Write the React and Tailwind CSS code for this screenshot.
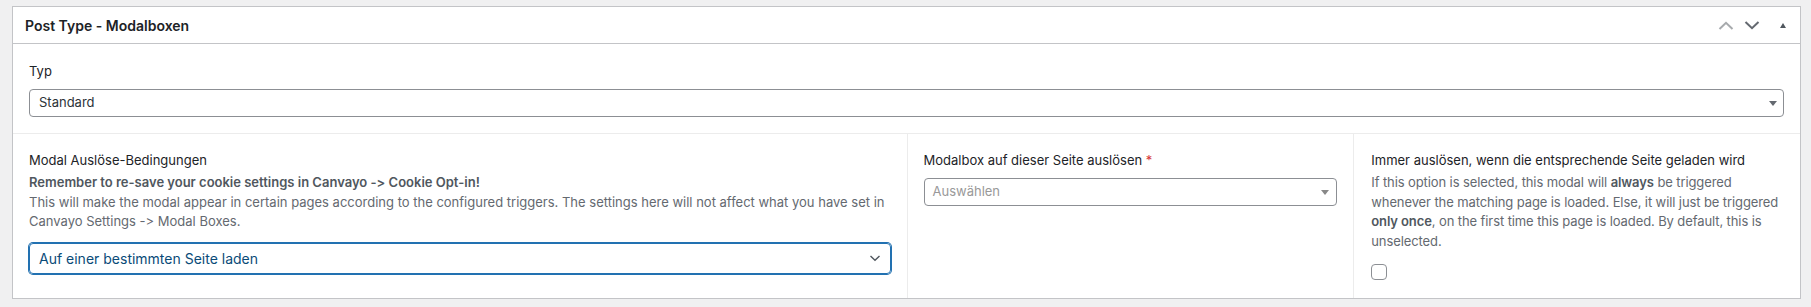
import React from 'react';

const font = { fontFamily: 'Inter, "Noto Sans", sans-serif' };

const ChevronUp = ({ className }) => (
  <svg className={className} width="16" height="9" viewBox="0 0 16 9" fill="none" stroke="currentColor" strokeWidth="2">
    <path d="M1.5 8L8 1.8 14.5 8" />
  </svg>
);

const ChevronDown = ({ className }) => (
  <svg className={className} width="16" height="9" viewBox="0 0 16 9" fill="none" stroke="currentColor" strokeWidth="2">
    <path d="M1.5 1L8 7.2 14.5 1" />
  </svg>
);

const Field = ({ label, required, children }) => (
  <div>
    <div className="text-[13px] leading-5 text-[#1d2327]">
      {label}
      {required && <span className="text-[#d63638]"> *</span>}
    </div>
    {children}
  </div>
);

export default function App() {
  return (
    <div
      className="min-h-[307px] bg-[#f0f0f1] pt-[6px] pl-3 pr-[10px] [font-feature-settings:'calt'_0,'liga'_0]"
      style={font}
    >
      <div className="border border-[#c3c4c7] bg-white">
        {/* postbox header */}
        <div className="flex h-[37px] items-center justify-between border-b border-[#c3c4c7] pl-3 pr-[14px]">
          <h2 className="text-[14px] font-semibold text-[#1d2327]">Post Type - Modalboxen</h2>
          <div className="flex items-center">
            <ChevronUp className="text-[#a7aaad]" />
            <ChevronDown className="ml-[10px] text-[#646970]" />
            <span className="ml-[20px] h-0 w-0 border-x-[3.5px] border-b-[5px] border-x-transparent border-b-[#50575e]" />
          </div>
        </div>

        {/* Typ */}
        <div className="px-4 pt-[17px] pb-4">
          <Field label="Typ">
            <div className="mt-2 flex h-[28px] items-center justify-between rounded-[4px] border border-[#8c8f94] pl-[9px] pr-[6px] text-[13px] text-[#2c3338]">
              <span>Standard</span>
              <span className="h-0 w-0 border-x-[4px] border-t-[5px] border-x-transparent border-t-[#646970]" />
            </div>
          </Field>
        </div>

        {/* trigger row */}
        <div className="grid h-[165px] grid-cols-[2fr_1fr_1fr] border-t border-[#ececec]">
          <div className="px-4 pt-4">
            <Field label="Modal Auslöse-Bedingungen">
              <div className="mt-[3px] text-[13px] leading-[19.5px] text-[#646970]">
                <p className="font-semibold text-[#50575e]">Remember to re-save your cookie settings in Canvayo -&gt; Cookie Opt-in!</p>
                <p>
                  This will make the modal appear in certain pages according to the configured triggers. The settings here will not affect what you have set in Canvayo Settings -&gt; Modal Boxes.
                </p>
              </div>
              <div className="mt-[11px] flex h-[31px] items-center justify-between rounded-[4px] border border-[#2271b1] pl-[9px] pr-[9px] text-[14px] text-[#0a4b78] shadow-[0_0_0_1px_#2271b1]">
                <span>Auf einer bestimmten Seite laden</span>
                <svg width="12" height="8" viewBox="0 0 12 8" fill="none" stroke="#50575e" strokeWidth="1.4">
                  <path d="M1.5 2L6 6.3 10.5 2" />
                </svg>
              </div>
            </Field>
          </div>

          <div className="border-l border-[#ececec] px-4 pt-4">
            <Field label="Modalbox auf dieser Seite auslösen" required>
              <div className="mt-2 flex h-[28px] items-center justify-between rounded-[4px] border border-[#8c8f94] pl-[8px] pr-[7px] text-[13px] text-[#999]">
                <span>Auswählen</span>
                <span className="h-0 w-0 border-x-[4px] border-t-[5px] border-x-transparent border-t-[#888]" />
              </div>
            </Field>
          </div>

          <div className="border-l border-[#ececec] pl-[17px] pr-[6px] pt-4">
            <Field label="Immer auslösen, wenn die entsprechende Seite geladen wird">
              <p className="mt-[3px] text-[13px] leading-[19.5px] tracking-[-0.1px] text-[#646970]">
                If this option is selected, this modal will <strong className="font-semibold text-[#50575e]">always</strong> be triggered whenever the matching page is loaded. Else, it will just be triggered <strong className="font-semibold text-[#50575e]">only once</strong>, on the first time this page is loaded. By default, this is unselected.
              </p>
              <div className="mt-[13px] h-4 w-4 rounded-[4px] border border-[#8c8f94] bg-white" />
            </Field>
          </div>
        </div>
      </div>
    </div>
  );
}
